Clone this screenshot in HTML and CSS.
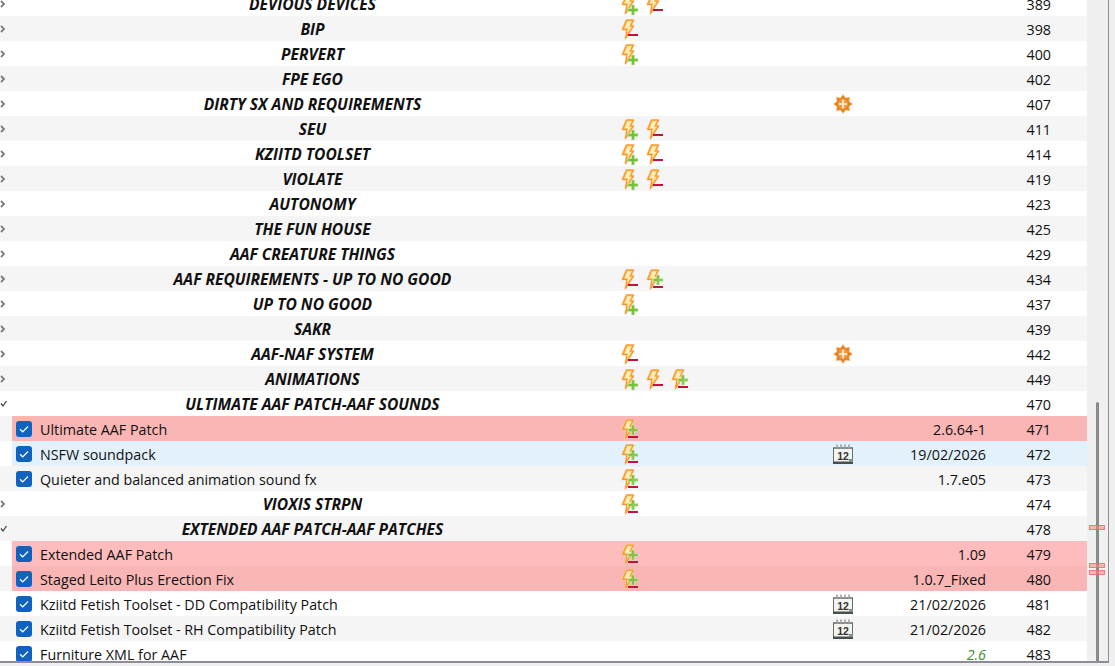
FILE: index.html
```html
<!DOCTYPE html>
<html lang="en">
<head>
<meta charset="utf-8">
<title>Mod list</title>
<link rel="stylesheet" href="styles.css">
</head>
<body>
<svg class="defs" width="0" height="0" aria-hidden="true">
  <defs>
    <g id="bolt">
      <path d="M5.500 3H12.500L9.500 9H12.500L4.500 21.500L6 12.500H1.500Z" fill="#ffd47c" stroke="#fbd3a4" stroke-width="2.200" stroke-linejoin="round"/>
      <path d="M5.500 3H12.500L9.500 9H12.500L4.500 21.500L6 12.500H1.500Z" fill="#fdbf52" stroke="#f5902a" stroke-width="1" stroke-linejoin="round"/>
      <path d="M6.500 4.300H10.500L8 10H10.200L6 16.500L7 11.200H3.800Z" fill="#ffeeb8"/>
    </g>
    <path id="plus" d="M10.500 -5H13.500V-1.500H17V1.500H13.500V5H10.500V1.500H7V-1.500H10.500Z" fill="#74c23a" stroke="#c9e8ae" stroke-width=".7"/>
    <rect id="minus" x="7" y="0" width="10" height="2" fill="#c0143c"/>
    <symbol id="add" viewBox="0 0 20 24"><use href="#bolt"/><use href="#plus" transform="translate(0 18)"/></symbol>
    <symbol id="del" viewBox="0 0 20 24"><use href="#bolt"/><use href="#minus" transform="translate(0 17)"/></symbol>
    <symbol id="both" viewBox="0 0 20 24"><use href="#bolt"/><use href="#plus" transform="translate(0 13)" opacity=".85"/><use href="#minus" transform="translate(0 19)"/></symbol>
    <symbol id="sun" viewBox="0 0 20 20">
      <path d="M10 .5L12.500 4L16.700 3.300L16 7.500L19.500 10L16 12.500L16.700 16.700L12.500 16L10 19.500L7.500 16L3.300 16.700L4 12.500L.5 10L4 7.500L3.300 3.300L7.500 4Z" fill="#e8801f" stroke="#fbc08c" stroke-width=".7"/>
      <circle cx="10" cy="10" r="5" fill="#f49a45"/>
      <path d="M9 5.500h2V9h3v2h-3v3.500H9V11H6V9h3z" fill="#fde6c8"/>
    </symbol>
    <symbol id="cal" viewBox="0 0 20 20">
      <path d="M.5 3.500h19v15h-19z" fill="#f4f4f0" stroke="#6b6b6b"/>
      <path d="M1 3h18v2H1z" fill="#8a8a8a"/>
      <path d="M4 .5v4M8 .5v4M12 .5v4M16 .5v4" stroke="#a0a0a0" stroke-width="1.600"/>
      <path d="M0 17.500h20V20H0z" fill="#47504e"/>
      <text class="cal-day" x="10" y="15.500" text-anchor="middle">12</text>
      <path d="M16 15h4v3h-4z" fill="#8b8b8b"/>
    </symbol>
    <symbol id="tick" viewBox="0 0 16 16">
      <rect width="16" height="16" rx="3" fill="#0f62be"/>
      <path d="M4 8.300l2.700 2.500L12 5.500" fill="none" stroke="#fff" stroke-width="1.200"/>
    </symbol>
    <symbol id="closed" viewBox="0 0 8 8"><path d="M-1 1L2 4L-1 7" fill="none" stroke="#7d7d7d" stroke-width="1.800"/></symbol>
    <symbol id="open" viewBox="0 0 8 8"><path d="M-1 3.500L1 6L4.500 1" fill="none" stroke="#444" stroke-width="1.300"/></symbol>
  </defs>
</svg>

<div class="window">
  <main class="table">
    <div class="rows">
      <div class="row"><svg class="arrow"><use href="#closed"/></svg><div class="name head">DEVIOUS DEVICES</div><div class="flags"><svg class="flag"><use href="#add"/></svg><svg class="flag"><use href="#del"/></svg></div><div class="content"></div><div class="version"></div><div class="prio">389</div></div>
      <div class="row alt"><svg class="arrow"><use href="#closed"/></svg><div class="name head">BIP</div><div class="flags"><svg class="flag"><use href="#del"/></svg></div><div class="content"></div><div class="version"></div><div class="prio">398</div></div>
      <div class="row"><svg class="arrow"><use href="#closed"/></svg><div class="name head">PERVERT</div><div class="flags"><svg class="flag"><use href="#add"/></svg></div><div class="content"></div><div class="version"></div><div class="prio">400</div></div>
      <div class="row alt"><svg class="arrow"><use href="#closed"/></svg><div class="name head">FPE EGO</div><div class="flags"></div><div class="content"></div><div class="version"></div><div class="prio">402</div></div>
      <div class="row"><svg class="arrow"><use href="#closed"/></svg><div class="name head">DIRTY SX AND REQUIREMENTS</div><div class="flags"></div><div class="content"><svg class="sun"><use href="#sun"/></svg></div><div class="version"></div><div class="prio">407</div></div>
      <div class="row alt"><svg class="arrow"><use href="#closed"/></svg><div class="name head">SEU</div><div class="flags"><svg class="flag"><use href="#add"/></svg><svg class="flag"><use href="#del"/></svg></div><div class="content"></div><div class="version"></div><div class="prio">411</div></div>
      <div class="row"><svg class="arrow"><use href="#closed"/></svg><div class="name head">KZIITD TOOLSET</div><div class="flags"><svg class="flag"><use href="#add"/></svg><svg class="flag"><use href="#del"/></svg></div><div class="content"></div><div class="version"></div><div class="prio">414</div></div>
      <div class="row alt"><svg class="arrow"><use href="#closed"/></svg><div class="name head">VIOLATE</div><div class="flags"><svg class="flag"><use href="#add"/></svg><svg class="flag"><use href="#del"/></svg></div><div class="content"></div><div class="version"></div><div class="prio">419</div></div>
      <div class="row"><svg class="arrow"><use href="#closed"/></svg><div class="name head">AUTONOMY</div><div class="flags"></div><div class="content"></div><div class="version"></div><div class="prio">423</div></div>
      <div class="row alt"><svg class="arrow"><use href="#closed"/></svg><div class="name head">THE FUN HOUSE</div><div class="flags"></div><div class="content"></div><div class="version"></div><div class="prio">425</div></div>
      <div class="row"><svg class="arrow"><use href="#closed"/></svg><div class="name head">AAF CREATURE THINGS</div><div class="flags"></div><div class="content"></div><div class="version"></div><div class="prio">429</div></div>
      <div class="row alt"><svg class="arrow"><use href="#closed"/></svg><div class="name head">AAF REQUIREMENTS - UP TO NO GOOD</div><div class="flags"><svg class="flag"><use href="#del"/></svg><svg class="flag"><use href="#both"/></svg></div><div class="content"></div><div class="version"></div><div class="prio">434</div></div>
      <div class="row"><svg class="arrow"><use href="#closed"/></svg><div class="name head">UP TO NO GOOD</div><div class="flags"><svg class="flag"><use href="#add"/></svg></div><div class="content"></div><div class="version"></div><div class="prio">437</div></div>
      <div class="row alt"><svg class="arrow"><use href="#closed"/></svg><div class="name head">SAKR</div><div class="flags"></div><div class="content"></div><div class="version"></div><div class="prio">439</div></div>
      <div class="row"><svg class="arrow"><use href="#closed"/></svg><div class="name head">AAF-NAF SYSTEM</div><div class="flags"><svg class="flag"><use href="#del"/></svg></div><div class="content"><svg class="sun"><use href="#sun"/></svg></div><div class="version"></div><div class="prio">442</div></div>
      <div class="row alt"><svg class="arrow"><use href="#closed"/></svg><div class="name head">ANIMATIONS</div><div class="flags"><svg class="flag"><use href="#add"/></svg><svg class="flag"><use href="#del"/></svg><svg class="flag"><use href="#both"/></svg></div><div class="content"></div><div class="version"></div><div class="prio">449</div></div>
      <div class="row"><svg class="arrow"><use href="#open"/></svg><div class="name head">ULTIMATE AAF PATCH-AAF SOUNDS</div><div class="flags"></div><div class="content"></div><div class="version"></div><div class="prio">470</div></div>
      <div class="row alt"><span class="arrow"></span><div class="cells red"><svg class="check"><use href="#tick"/></svg><div class="name">Ultimate AAF Patch</div><div class="flags"><svg class="flag"><use href="#both"/></svg></div><div class="content"></div><div class="version">2.6.64-1</div><div class="prio">471</div></div></div>
      <div class="row"><span class="arrow"></span><div class="cells blue"><svg class="check"><use href="#tick"/></svg><div class="name">NSFW soundpack</div><div class="flags"><svg class="flag"><use href="#both"/></svg></div><div class="content"><svg class="cal"><use href="#cal"/></svg></div><div class="version">19/02/2026</div><div class="prio">472</div></div></div>
      <div class="row alt"><span class="arrow"></span><div class="cells"><svg class="check"><use href="#tick"/></svg><div class="name">Quieter and balanced animation sound fx</div><div class="flags"><svg class="flag"><use href="#both"/></svg></div><div class="content"></div><div class="version">1.7.e05</div><div class="prio">473</div></div></div>
      <div class="row"><svg class="arrow"><use href="#closed"/></svg><div class="name head">VIOXIS STRPN</div><div class="flags"><svg class="flag"><use href="#both"/></svg></div><div class="content"></div><div class="version"></div><div class="prio">474</div></div>
      <div class="row alt"><svg class="arrow"><use href="#open"/></svg><div class="name head">EXTENDED AAF PATCH-AAF PATCHES</div><div class="flags"></div><div class="content"></div><div class="version"></div><div class="prio">478</div></div>
      <div class="row"><span class="arrow"></span><div class="cells red-light"><svg class="check"><use href="#tick"/></svg><div class="name">Extended AAF Patch</div><div class="flags"><svg class="flag"><use href="#both"/></svg></div><div class="content"></div><div class="version">1.09</div><div class="prio">479</div></div></div>
      <div class="row alt"><span class="arrow"></span><div class="cells red"><svg class="check"><use href="#tick"/></svg><div class="name">Staged Leito Plus Erection Fix</div><div class="flags"><svg class="flag"><use href="#both"/></svg></div><div class="content"></div><div class="version">1.0.7_Fixed</div><div class="prio">480</div></div></div>
      <div class="row"><span class="arrow"></span><div class="cells"><svg class="check"><use href="#tick"/></svg><div class="name">Kziitd Fetish Toolset - DD Compatibility Patch</div><div class="flags"></div><div class="content"><svg class="cal"><use href="#cal"/></svg></div><div class="version">21/02/2026</div><div class="prio">481</div></div></div>
      <div class="row alt"><span class="arrow"></span><div class="cells"><svg class="check"><use href="#tick"/></svg><div class="name">Kziitd Fetish Toolset - RH Compatibility Patch</div><div class="flags"></div><div class="content"><svg class="cal"><use href="#cal"/></svg></div><div class="version">21/02/2026</div><div class="prio">482</div></div></div>
      <div class="row"><span class="arrow"></span><div class="cells"><svg class="check"><use href="#tick"/></svg><div class="name">Furniture XML for AAF</div><div class="flags"></div><div class="content"></div><div class="version newer">2.6</div><div class="prio">483</div></div></div>
    </div>
  </main>
  <aside class="scrollbar">
    <div class="thumb"></div>
    <span class="mark mark-a"></span>
    <span class="mark mark-b"></span>
    <span class="mark mark-c"></span>
  </aside>
  <div class="edge"></div>
</div>
</body>
</html>
```
FILE: styles.css
```css
html, body {
  margin: 0;
  padding: 0;
  height: 666px;
  overflow: hidden;
  background: #f0f0f0;
}

.defs { position: absolute; }

.window {
  display: flex;
  width: 1109px;
  height: 661px;
  border-bottom: 2px solid #8d8d99;
  font-family: "Open Sans", "Noto Sans", sans-serif;
  font-size: 14.3px;
  color: #111;
}

.table {
  width: 1087px;
  overflow: hidden;
  background: #fff;
}

.rows { margin-top: -9px; }

.row {
  display: flex;
  align-items: center;
  height: 25px;
  background: #fff;
}
.row.alt { background: #f5f5f5; }

.arrow {
  flex: none;
  width: 12px;
  height: 8px;
}

.cells {
  display: flex;
  align-items: center;
  flex: 1;
  height: 25px;
  min-width: 0;
}
.red { background: #fab5b5; }
.red-light { background: #ffbcbc; }
.blue { background: #e3f1fc; }

.check {
  flex: none;
  width: 16px;
  height: 16px;
  margin: 0 8px 0 4px;
}

.name {
  flex: 1;
  min-width: 0;
  padding-top: 2px;
  white-space: nowrap;
}
.name.head {
  padding-top: 0;
  text-align: center;
  font-size: 15.6px;
  font-weight: 700;
  font-style: italic;
}

.flags {
  flex: none;
  display: flex;
  gap: 5px;
  width: 212px;
  padding-left: 8px;
  box-sizing: border-box;
}
.flag {
  width: 20px;
  height: 24px;
  flex: none;
}

.content {
  flex: none;
  display: flex;
  align-items: center;
  width: 40px;
  padding-left: 8px;
  box-sizing: border-box;
}
.sun { width: 20px; height: 20px; flex: none; }
.cal { width: 20px; height: 20px; flex: none; }
.cal-day {
  font-family: "Liberation Sans", sans-serif;
  font-size: 10.5px;
  font-weight: 700;
  fill: #333;
}

.version {
  flex: none;
  width: 121px;
  padding-top: 2px;
  text-align: right;
  white-space: nowrap;
}
.version.newer {
  color: #3f8f2a;
  font-style: italic;
}

.prio {
  flex: none;
  width: 101px;
  padding: 2px 36px 0 0;
  text-align: right;
  box-sizing: border-box;
}

.scrollbar {
  position: relative;
  flex: none;
  width: 21px;
  background: #f0f0f0;
}

.thumb {
  width: 3px;
  height: 259px;
  margin: 402px 0 0 9px;
  border-radius: 2px 2px 0 0;
  background: #8a8a8a;
}

.mark {
  position: absolute;
  left: 2px;
  width: 16px;
  height: 5px;
  background: rgba(250, 130, 130, .55);
  border: 1px solid rgba(240, 100, 100, .7);
  box-sizing: border-box;
}
.mark-a { top: 525px; }
.mark-b { top: 563px; }
.mark-c { top: 570px; }

.edge {
  flex: none;
  width: 1px;
  background: #8d8d99;
}
```
